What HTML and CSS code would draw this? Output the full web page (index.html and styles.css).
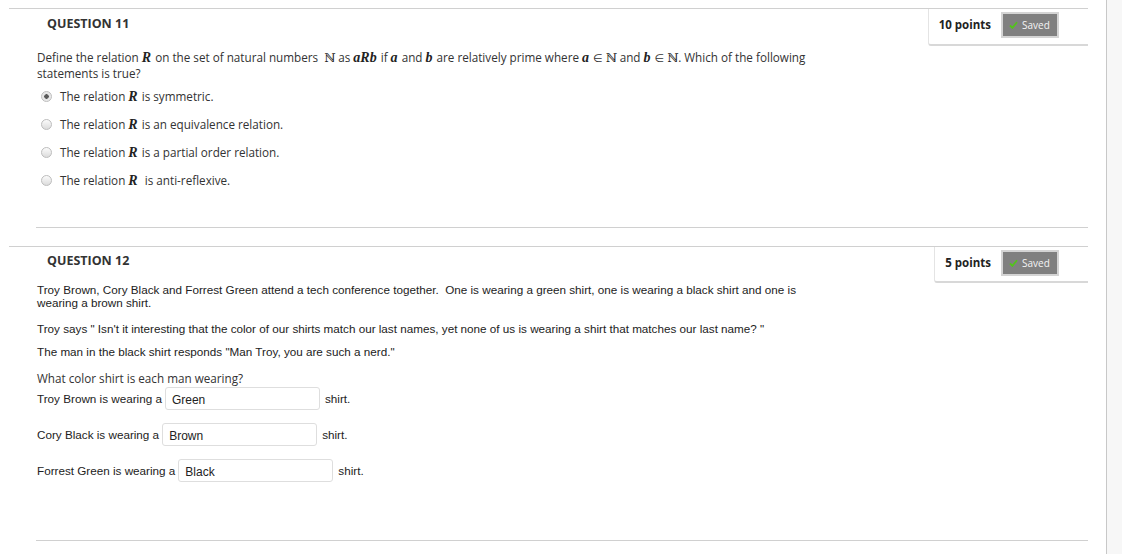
FILE: index.html
```html
<!DOCTYPE html>
<html>
<head>
<meta charset="utf-8">
<link rel="stylesheet" href="styles.css">
</head>
<body>
<div class="page">
  <main class="content">
    <section class="question q11">
      <div class="q-head">
        <h3 class="q-title">QUESTION 11</h3>
        <div class="points-box">
          <span class="points">10 points</span>
          <span class="saved"><svg class="check" width="9" height="8" viewBox="0 0 9 8"><path d="M1 4.5 L3.4 6.8 L8 1.2" fill="none" stroke="#52c41a" stroke-width="1.8"/></svg>Saved</span>
        </div>
      </div>
      <div class="q-body os">
        <p class="stem">Define the relation <i class="m">R</i> on the set of natural numbers &nbsp;<span class="bb">ℕ</span> as <i class="m">aRb</i> if <i class="m">a</i> and <i class="m">b</i> are relatively prime where <i class="m">a</i> <span class="rel">∈</span> <span class="bb">ℕ</span> and <i class="m">b</i> <span class="rel">∈</span> <span class="bb">ℕ</span>. Which of the following <span>statements is true?</span></p>
        <label class="opt"><input type="radio" name="q11" class="radio" checked><span>The relation <i class="m">R</i> is symmetric.</span></label>
        <label class="opt"><input type="radio" name="q11" class="radio"><span>The relation <i class="m">R</i> is an equivalence relation.</span></label>
        <label class="opt"><input type="radio" name="q11" class="radio"><span>The relation <i class="m">R</i> is a partial order relation.</span></label>
        <label class="opt"><input type="radio" name="q11" class="radio"><span>The relation <i class="m">R</i> &nbsp;is anti-reflexive.</span></label>
      </div>
      <hr class="sep sep-11">
    </section>

    <section class="question q12">
      <div class="q-head">
        <h3 class="q-title">QUESTION 12</h3>
        <div class="points-box">
          <span class="points">5 points</span>
          <span class="saved"><svg class="check" width="9" height="8" viewBox="0 0 9 8"><path d="M1 4.5 L3.4 6.8 L8 1.2" fill="none" stroke="#52c41a" stroke-width="1.8"/></svg>Saved</span>
        </div>
      </div>
      <div class="q-body ar">
        <p class="p1">Troy Brown, Cory Black and Forrest Green attend a tech conference together.&nbsp; One is wearing a green shirt, one is wearing a black shirt and one is wearing a brown shirt.</p>
        <p class="p2">Troy says " Isn't it interesting that the color of our shirts match our last names, yet none of us is wearing a shirt that matches our last name? "</p>
        <p class="p3">The man in the black shirt responds "Man Troy, you are such a nerd."</p>
        <p class="ask os">What color shirt is each man wearing?</p>
        <div class="fill"><span>Troy Brown is wearing a</span><input class="blank" type="text" value="Green"><span>shirt.</span></div>
        <div class="fill"><span>Cory Black is wearing a</span><input class="blank" type="text" value="Brown"><span>shirt.</span></div>
        <div class="fill"><span>Forrest Green is wearing a</span><input class="blank" type="text" value="Black"><span>shirt.</span></div>
      </div>
      <hr class="sep sep-12">
    </section>
  </main>
  <div class="scrollbar"></div>
</div>
</body>
</html>
```

FILE: styles.css
```css
html, body {
  margin: 0;
  padding: 0;
  background: #fff;
  height: 100%;
}

.page {
  display: flex;
  height: 554px;
  overflow: hidden;
}

.content {
  flex: 1;
  padding-top: 8px;
}

.scrollbar {
  width: 15px;
  border-left: 1px solid #c8c8c8;
  background: #f7f7f7;
}

.question {
  margin-left: 9px;
  width: 1079px;
  border-top: 1px solid #d0d0d0;
}

.q-head {
  display: flex;
  justify-content: space-between;
  align-items: flex-start;
}

.q-title {
  margin: 0;
  padding: 7px 0 0 38px;
  font-family: "Open Sans", sans-serif;
  font-weight: 700;
  font-size: 12.5px;
  line-height: 16px;
  color: #333;
}

.points-box {
  display: flex;
  align-items: center;
  gap: 10px;
  padding: 3px 29px 6px 10px;
  border-left: 1px solid #e4e4e4;
  border-bottom: 2px solid #d8d8d8;
  border-bottom-left-radius: 3px;
}

.q12 .points-box {
  padding-bottom: 5px;
}

.points {
  font-family: "Open Sans", sans-serif;
  font-weight: 700;
  font-size: 11.5px;
  color: #222;
  line-height: 16px;
}

.saved {
  display: flex;
  align-items: center;
  gap: 4px;
  width: 48px;
  height: 22px;
  box-sizing: content-box;
  padding-left: 6px;
  background: #808080;
  border: 2px solid #d4d4d4;
  font-family: "Open Sans", sans-serif;
  font-size: 10px;
  color: #f4f4f4;
}

.saved .check {
  flex: none;
}

.q-body {
  padding-left: 28px;
  width: 775px;
  color: #333;
}

.os {
  font-family: "Open Sans", sans-serif;
  font-size: 11.7px;
}

.ar {
  font-family: "Liberation Sans", Arial, sans-serif;
  font-size: 11.7px;
  color: #222;
}

.stem {
  margin: 4px 0 0;
  line-height: 14px;
}

.m {
  font-family: "Liberation Serif", serif;
  font-style: italic;
  font-weight: 700;
  font-size: 14px;
  line-height: 14px;
  padding-right: 1px;
  color: #222;
}

.bb {
  font-family: "DejaVu Serif", serif;
  font-size: 12px;
  line-height: 14px;
  color: #222;
}

.rel {
  font-family: "DejaVu Sans", sans-serif;
  font-size: 11px;
  line-height: 14px;
  color: #333;
}

.opt {
  display: flex;
  align-items: center;
  height: 18px;
  line-height: 18px;
  margin-top: 10px;
}

.stem + .opt {
  margin-top: 7px;
}

.radio {
  appearance: none;
  -webkit-appearance: none;
  width: 11px;
  height: 11px;
  margin: 0 8px 0 4px;
  border-radius: 50%;
  border: 1px solid #bdbdbd;
  background: linear-gradient(#fbfbfb, #dcdcdc);
  box-sizing: border-box;
  flex: none;
}

.radio:checked {
  background: radial-gradient(circle, #5a5a5a 0 2px, #e2e2e2 2.5px, #f3f3f3 100%);
}

.sep {
  border: 0;
  height: 0;
  border-top: 1px solid #d0d0d0;
  margin: 0 0 0 27px;
}

.sep-11 {
  margin-top: 38px;
  margin-bottom: 18px;
}

.q12 .q-head .q-title {
  padding-top: 6px;
}

.q12 .q-body p {
  margin: 0;
  line-height: 13px;
}

.q12 .q-body .p2 {
  margin-top: 13px;
}

.q12 .q-body .p3 {
  margin-top: 10px;
}

.q12 .q-body .ask {
  margin-top: 13px;
  line-height: 14px;
  color: #333;
}

.fill {
  display: flex;
  align-items: center;
  height: 23px;
  margin-top: 2px;
  gap: 3px;
}

.fill + .fill {
  margin-top: 13px;
}

.fill span:last-child {
  margin-left: 2px;
}

.blank {
  width: 155px;
  height: 23px;
  box-sizing: border-box;
  border: 1px solid #dedede;
  border-radius: 3px;
  padding: 2px 6px 0;
  font-family: "Liberation Sans", Arial, sans-serif;
  font-size: 12px;
  color: #222;
  background: #fff;
}

.sep-12 {
  margin-top: 58px;
}
```
